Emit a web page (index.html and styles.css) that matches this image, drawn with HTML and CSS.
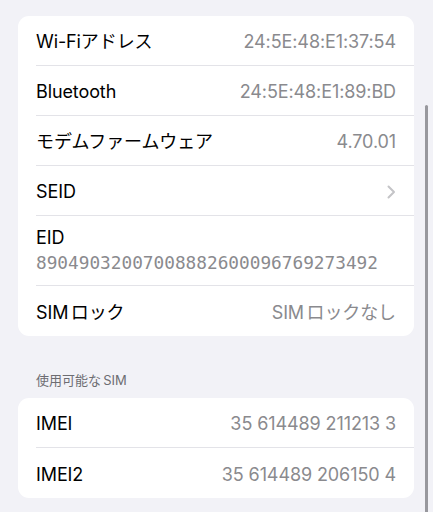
FILE: index.html
```html
<!DOCTYPE html>
<html lang="ja">
<head>
<meta charset="utf-8">
<link rel="stylesheet" href="styles.css">
</head>
<body>
<div class="page">
  <div class="card first">
    <div class="row"><span class="label">Wi-Fiアドレス</span><span class="value">24:5E:48:E1:37:54</span></div>
    <div class="row"><span class="label">Bluetooth</span><span class="value">24:5E:48:E1:89:BD</span></div>
    <div class="row"><span class="label">モデムファームウェア</span><span class="value">4.70.01</span></div>
    <div class="row"><span class="label">SEID</span>
      <svg class="chev" width="9" height="14" viewBox="0 0 9 14"><path d="M1.5 1.5 L7 7 L1.5 12.5" fill="none" stroke="#c4c4c7" stroke-width="2" stroke-linecap="round" stroke-linejoin="round"/></svg>
    </div>
    <div class="row tall"><span class="label">EID</span><span class="mono">89049032007008882600096769273492</span></div>
    <div class="row"><span class="label tight">SIM ロック</span><span class="value tight">SIM ロックなし</span></div>
  </div>
  <div class="section-head">使用可能な SIM</div>
  <div class="card">
    <div class="row"><span class="label">IMEI</span><span class="value">35 614489 211213 3</span></div>
    <div class="row"><span class="label">IMEI2</span><span class="value">35 614489 206150 4</span></div>
  </div>
</div>
<div class="scrollbar"></div>
</body>
</html>
```

FILE: styles.css
```css
html, body {
  margin: 0;
  padding: 0;
  background: #f2f2f7;
}
body {
  font-family: "Inter", "Noto Sans CJK JP", sans-serif;
  color: #000;
  width: 433px;
  height: 512px;
  overflow: hidden;
  position: relative;
}
.page {
  padding: 16px 19px 0 18px;
}
.card {
  background: #fff;
  border-radius: 11px;
  overflow: hidden;
}
.row {
  height: 50px;
  margin-left: 18px;
  padding-right: 18px;
  padding-top: 3px;
  display: flex;
  align-items: center;
  justify-content: space-between;
  border-bottom: 1px solid #e3e3e8;
  box-sizing: border-box;
  font-size: 18px;
}
.row:last-child {
  border-bottom: none;
}
.row.tall {
  height: 70px;
  flex-direction: column;
  align-items: flex-start;
  justify-content: flex-start;
  padding-top: 11px;
}
.label {
  line-height: 22px;
  letter-spacing: -0.1px;
}
.value {
  color: #8a8a8e;
  line-height: 22px;
  letter-spacing: -0.1px;
}
.tight {
  word-spacing: -2.5px;
}
.mono {
  font-family: "DejaVu Sans Mono", monospace;
  color: #8a8a8e;
  font-size: 17.75px;
  line-height: 22px;
  margin-top: 3px;
}
.section-head {
  font-size: 13px;
  color: #6d6d72;
  padding: 37px 0 0 18px;
  height: 25px;
  line-height: 15px;
  word-spacing: -1.5px;
}
.scrollbar {
  position: absolute;
  left: 425px;
  top: 105px;
  width: 3px;
  height: 420px;
  border-radius: 2px;
  background: #98989d;
}
```
